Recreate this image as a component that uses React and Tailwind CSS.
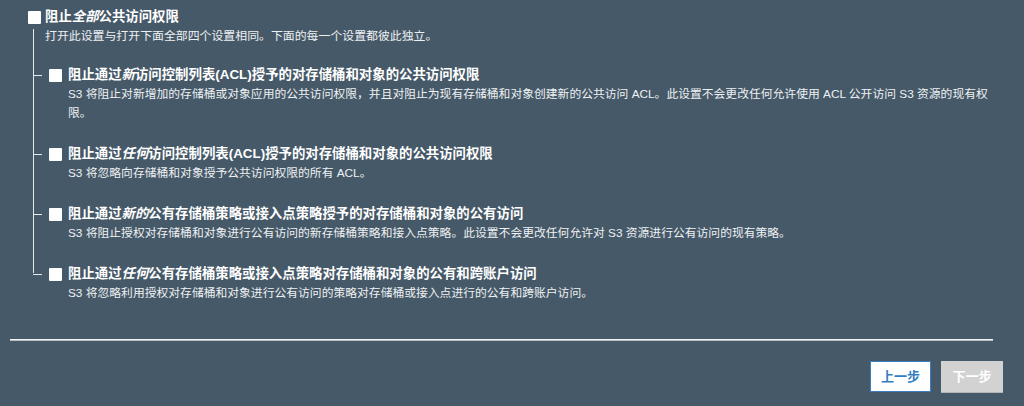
import React from "react"

const font = { fontFamily: '"Liberation Sans", "Noto Sans CJK SC", sans-serif' }

const Box = () => <span className="inline-block w-[13px] h-[13px] bg-white rounded-[1px] shrink-0" />

const items = [
  {
    title: (
      <>
        阻止通过<i>新</i>访问控制列表(ACL)授予的对存储桶和对象的公共访问权限
      </>
    ),
    desc: "S3 将阻止对新增加的存储桶或对象应用的公共访问权限，并且对阻止为现有存储桶和对象创建新的公共访问 ACL。此设置不会更改任何允许使用 ACL 公开访问 S3 资源的现有权限。",
  },
  {
    title: (
      <>
        阻止通过<i>任何</i>访问控制列表(ACL)授予的对存储桶和对象的公共访问权限
      </>
    ),
    desc: "S3 将忽略向存储桶和对象授予公共访问权限的所有 ACL。",
  },
  {
    title: (
      <>
        阻止通过<i>新的</i>公有存储桶策略或接入点策略授予的对存储桶和对象的公有访问
      </>
    ),
    desc: "S3 将阻止授权对存储桶和对象进行公有访问的新存储桶策略和接入点策略。此设置不会更改任何允许对 S3 资源进行公有访问的现有策略。",
  },
  {
    title: (
      <>
        阻止通过<i>任何</i>公有存储桶策略或接入点策略对存储桶和对象的公有和跨账户访问
      </>
    ),
    desc: "S3 将忽略利用授权对存储桶和对象进行公有访问的策略对存储桶或接入点进行的公有和跨账户访问。",
  },
]

export default function App() {
  return (
    <div className="w-[1024px] h-[406px] bg-[#465968] text-white overflow-hidden" style={font}>
      <div className="pl-[28px] pt-[7px]">
        <div className="flex items-center gap-[4px] h-[20px]">
          <Box />
          <span className="text-[13.4px] font-bold">
            阻止<i>全部</i>公共访问权限
          </span>
        </div>
        <div className="relative ml-[5px]">
          <div className="absolute left-0 top-[2px] bottom-[30px] w-px bg-[#e6e9ec]" />
          <p className="pl-[12px] text-[11.9px] leading-[19px] text-[#eef1f3]">
            打开此设置与打开下面全部四个设置相同。下面的每一个设置都彼此独立。
          </p>
          <div className="mt-[19px] flex flex-col gap-[21px]">
            {items.map((it, i) => (
              <div key={i} className="relative pl-[16px]">
                <div className="absolute left-0 top-[10px] w-[9px] h-px bg-[#e6e9ec]" />
                <div className="flex items-center gap-[6px] h-[20px]">
                  <Box />
                  <span className="text-[13.4px] font-bold whitespace-nowrap">{it.title}</span>
                </div>
                <p className="pl-[19px] w-[941px] text-[11.8px] leading-[19px] text-[#eef1f3]">{it.desc}</p>
              </div>
            ))}
          </div>
        </div>
      </div>
      <div className="mx-[10px] mt-[36px] w-[983px] h-[2px] bg-[#f4f4f4] border-b border-[#b9c0c6]" />
      <div className="flex justify-end gap-[10px] pr-[21px] mt-[20px]">
        <button className="w-[61px] h-[31px] bg-white border border-[#3a7fc1] text-[#2f7ec4] text-[13px] font-bold">
          上一步
        </button>
        <button className="w-[62px] h-[32px] bg-[#d2d2d2] border-b border-[#b5b5b5] text-white text-[13px] font-bold">
          下一步
        </button>
      </div>
    </div>
  )
}
